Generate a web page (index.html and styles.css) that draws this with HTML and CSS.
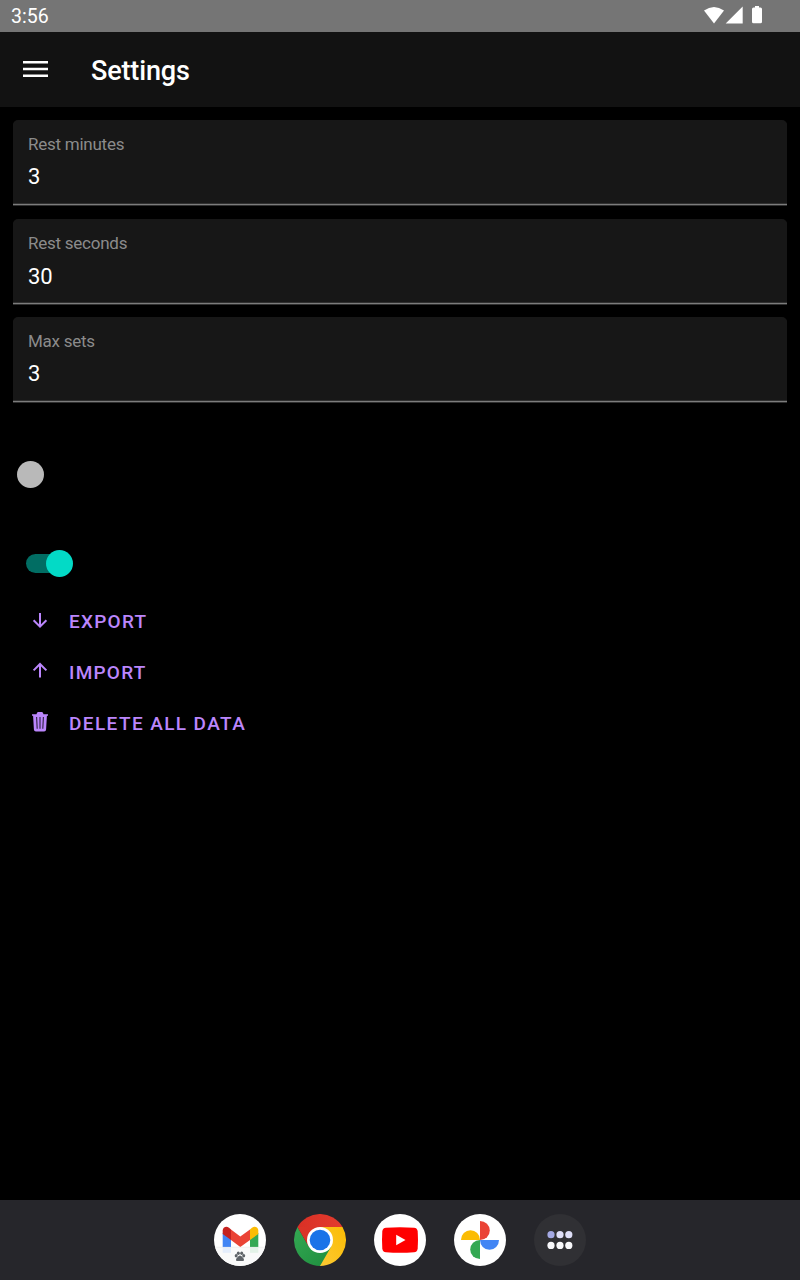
FILE: index.html
```html
<!DOCTYPE html>
<html lang="en">
<head>
<meta charset="utf-8">
<title>Settings</title>
<link rel="stylesheet" href="styles.css">
</head>
<body>
<div class="screen">
  <div class="status">
    <span class="clock">3:56</span>
    <svg class="status-icons" width="60" height="20" viewBox="0 0 60 20" fill="#fff">
      <path d="M0 4.600Q10-2.800 20 4.600L10 17.400Z"/>
      <path d="M21.700 17.500L38.700 .6V17.500Z"/>
      <path d="M51 1.500V0h4v1.500h1.500q1.500 0 1.500 1.500V15.700q0 1.500-1.500 1.500H49.500q-1.500 0-1.500-1.500V3q0-1.500 1.500-1.500Z"/>
    </svg>
  </div>
  <header class="appbar">
    <svg class="menu" width="25" height="16" viewBox="0 0 25 16" fill="#fff"><path d="M0 0h25v2.600H0zM0 6.700h25v2.600H0zM0 13.400h25V16H0z"/></svg>
    <h1 class="title">Settings</h1>
  </header>
  <main class="content">
    <label class="field"><span class="label">Rest minutes</span><span class="value">3</span></label>
    <label class="field second"><span class="label">Rest seconds</span><span class="value">30</span></label>
    <label class="field"><span class="label">Max sets</span><span class="value">3</span></label>
    <div class="switch off"><span class="thumb"></span></div>
    <div class="switch on"><span class="thumb"></span></div>
    <div class="actions">
      <button class="action"><svg width="20" height="20" viewBox="0 0 20 20" fill="none" stroke="currentColor" stroke-width="2"><path d="M10 2V15.500M3.600 9.200l6.400 6.400 6.400-6.400"/></svg><span>Export</span></button>
      <button class="action"><svg width="20" height="20" viewBox="0 0 20 20" fill="none" stroke="currentColor" stroke-width="2"><path d="M10 15.600V2M3.600 8.400L10 2l6.400 6.400"/></svg><span>Import</span></button>
      <button class="action"><svg width="20" height="20" viewBox="0 0 20 20"><path fill="currentColor" d="M2 2.300h4.500Q7 -.3 8.500 0h3Q13-.3 13.500 2.300H18v1.400h-1.100l-.8 13.800q-.1 1.900-2 1.900H5.900q-1.900 0-2-1.900L3.100 3.700H2Z"/><path d="M6.600 5l.6 11.800M10 5V16.800M13.400 5l-.6 11.800" stroke="#000" stroke-width="1.100" opacity=".75"/></svg><span class="wide">Delete all data</span></button>
    </div>
  </main>
  <nav class="dock">
    <svg width="52" height="52" viewBox="0 0 52 52">
      <circle cx="26" cy="26" r="26" fill="#fff"/>
      <path fill="#4285f4" d="M8.700 19L17 25v8.300H8.700Z"/>
      <path fill="#34a853" d="M36 25l8.300-6v14.300H36Z"/>
      <path fill="#ea4335" d="M17 15.500l9.300 7 9.700-7V26l-9.700 7L17 26Z"/>
      <path fill="#c5221f" d="M8.700 16.500c0-3.500 3.800-5 6.300-2.800l2 1.800V26l-8.300-6Z"/>
      <path fill="#fbbc04" d="M44.300 16.500c0-3.500-3.800-5-6.300-2.800l-2 1.800V26l8.300-6Z"/>
      <path fill="#fafafa" d="M1.100 33.300h49.800A26 26 0 0 1 1.100 33.300Z"/>
      <path fill="#e5eefc" d="M8.700 33.300H17v5.500H8.700Z"/><path fill="#e4f3e8" d="M36 33.300h8.300v5.500H36Z"/>
      <path d="M1.100 33.200h49.800" stroke="#ddd" stroke-width=".4"/>
      <g fill="#5f6368" transform="translate(-.5)"><ellipse cx="22.700" cy="41.800" rx="1.500" ry="1.700"/><ellipse cx="24.800" cy="39.200" rx="1.500" ry="1.700"/><ellipse cx="28.200" cy="39.200" rx="1.500" ry="1.700"/><ellipse cx="30.200" cy="41.800" rx="1.500" ry="1.700"/><path d="M26.500 41.500q1.300 0 2.300 1.500l1.300 1.500q1.200 2.500-1.300 2.600h-4.600q-2.500-.1-1.300-2.600l1.300-1.500q1-1.500 2.300-1.500Z"/></g>
    </svg>
    <svg width="52" height="52" viewBox="0 0 52 52">
      <defs>
        <linearGradient id="red" x1="0" x2="1"><stop offset="0" stop-color="#d93025"/><stop offset="1" stop-color="#e33b2e"/></linearGradient>
        <linearGradient id="green" x1="1" y1="1" x2="0" y2="0"><stop offset="0" stop-color="#1e8e3e"/><stop offset="1" stop-color="#34a853"/></linearGradient>
        <linearGradient id="yellow" x1="0" y1="1" x2="1" y2="0"><stop offset="0" stop-color="#fcc934"/><stop offset="1" stop-color="#fbbc04"/></linearGradient>
      </defs>
      <path fill="url(#red)" d="M26 26L3.480 13A26 26 0 0 1 48.520 13Z"/>
      <path fill="url(#yellow)" d="M26 13H48.520A26 26 0 0 1 26 52L26 26Z"/>
      <path fill="url(#green)" d="M3.480 13L14.740 32.500 26 26l11.260 6.500L26 52A26 26 0 0 1 3.480 13Z"/>
      <path fill="#db3327" d="M3.480 13L14.740 32.500 26 26V13Z"/>
      <circle cx="26" cy="26" r="13" fill="#fff"/><circle cx="26" cy="26" r="10.300" fill="#1a73e8"/>
    </svg>
    <svg width="52" height="52" viewBox="0 0 52 52">
      <circle cx="26" cy="26" r="26" fill="#fff"/>
      <path fill="red" d="M12 13.700Q26 12.700 40 13.700 43.400 14 43.700 17.500 44.300 26 43.700 34.500 43.400 38 40 38.300 26 39.300 12 38.300 8.600 38 8.300 34.500 7.700 26 8.300 17.500 8.600 14 12 13.700Z"/>
      <path fill="#fff" d="M22.200 20.700v10.600L31.500 26Z"/>
    </svg>
    <svg width="52" height="52" viewBox="0 0 52 52">
      <circle cx="26" cy="26" r="26" fill="#fff"/>
      <path fill="#ea4335" d="M26 7a9.800 9.500 0 0 1 0 19Z"/>
      <path fill="#fbbc04" d="M7 26a9.500 9.800 0 0 1 19 0Z"/>
      <path fill="#4285f4" d="M26 26h19a9.500 9.800 0 0 1-19 0Z"/>
      <path fill="#34a853" d="M26 26v19a9.800 9.500 0 0 1 0-19Z"/>
    </svg>
    <svg width="52" height="52" viewBox="0 0 52 52">
      <circle cx="26" cy="26" r="26" fill="#303034"/>
      <circle cx="17" cy="20.700" r="3.600" fill="#a4a9e4"/>
      <g fill="#dfdff8"><circle cx="26" cy="20.700" r="3.600"/><circle cx="34.800" cy="20.700" r="3.600"/></g>
      <g fill="#f8f8fb"><circle cx="17" cy="31.400" r="3.600"/><circle cx="26" cy="31.400" r="3.600"/><circle cx="34.800" cy="31.400" r="3.600"/></g>
    </svg>
  </nav>
</div>
</body>
</html>
```

FILE: styles.css
```css
* { box-sizing: border-box; }
body { margin: 0; background: #000; font-family: Roboto, sans-serif; color: #fff; }
.screen { width: 800px; height: 1280px; display: flex; flex-direction: column; }
.status { height: 32px; flex: none; background: #757575; display: flex; align-items: flex-start; justify-content: space-between; padding: 6px 36px 0 11px; }
.clock { font-size: 19.500px; line-height: 22px; }
.status-icons { display: block; }
.appbar { height: 75px; flex: none; background: #121212; display: flex; align-items: center; gap: 43px; padding: 0 23px; }
.menu { margin-bottom: 1.500px; }
.title { margin: 2px 0 0; font-size: 27px; line-height: 32px; font-weight: 500; letter-spacing: -.15px; }
.content { flex: 1; display: flex; flex-direction: column; align-items: stretch; padding: 13px; }
.field { display: flex; flex-direction: column; height: 85px; margin-bottom: 13px; padding: 14px 15px 0; background: #171717; border-radius: 5px 5px 0 0; border-bottom: 1px solid #7c7c7c; box-shadow: inset 0 -1px #303030, 0 1px #303030; }
.field:first-child { margin-bottom: 14px; }
.label { font-size: 17px; line-height: 20px; letter-spacing: -.25px; color: #8b8b8b; }
.value { font-size: 22px; line-height: 26px; margin-top: 10px; letter-spacing: -.2px; }
.second .value { margin-top: 11px; }
.switch { display: flex; align-items: center; height: 28px; }
.thumb { width: 27px; height: 27px; border-radius: 50%; }
.off { margin: 45px 0 0 4.400px; }
.off .thumb { background: #b9b9b9; }
.on { width: 47px; height: 19px; margin: 66.400px 0 0 12.900px; border-radius: 10px; background: linear-gradient(90deg, #016d63 75%, transparent 75%); justify-content: flex-end; }
.on .thumb { background: #03dac6; }
.actions { display: flex; flex-direction: column; align-items: flex-start; padding: 23.100px 0 0 17px; }
.action { display: flex; align-items: center; gap: 19px; height: 51px; padding: 0; border: 0; background: none; color: #bb86fc; font: 500 19px/24px Roboto, sans-serif; letter-spacing: 1.250px; text-transform: uppercase; }
.action svg { margin-bottom: 2px; }
.action:last-child svg { margin-bottom: 4px; }
.wide { letter-spacing: 1.400px; }
.dock { height: 80px; flex: none; background: #26262b; display: flex; align-items: center; justify-content: center; gap: 28px; }
```
